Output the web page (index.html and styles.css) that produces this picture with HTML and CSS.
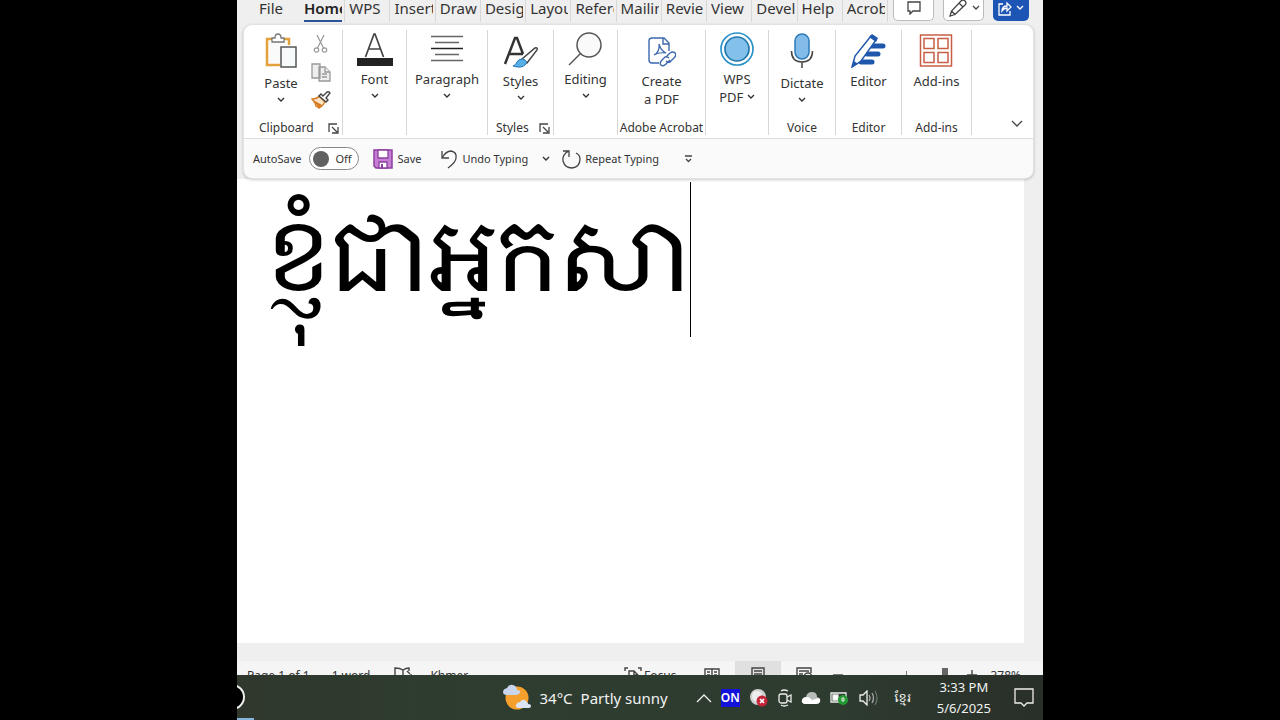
FILE: index.html
```html
<!DOCTYPE html>
<html lang="en">
<head>
<meta charset="utf-8">
<title>Word</title>
<link rel="stylesheet" href="styles.css">
</head>
<body>
<main class="screen">
  <header class="top">
    <nav class="tabs" aria-label="Ribbon tabs">
      <button class="tab tab-file"><span>File</span></button>
      <div class="tab-grid">
        <button class="tab active"><span>Home</span></button>
        <button class="tab"><span>WPS</span></button>
        <button class="tab"><span>Insert</span></button>
        <button class="tab"><span>Draw</span></button>
        <button class="tab" aria-label="Design"><span>Desig</span></button>
        <button class="tab" aria-label="Layout"><span>Layou</span></button>
        <button class="tab" aria-label="References"><span>Refere</span></button>
        <button class="tab" aria-label="Mailings"><span>Mailin</span></button>
        <button class="tab" aria-label="Review"><span>Revie</span></button>
        <button class="tab"><span>View</span></button>
        <button class="tab" aria-label="Developer"><span>Devel</span></button>
        <button class="tab"><span>Help</span></button>
        <button class="tab" aria-label="Acrobat"><span>Acrob</span></button>
      </div>
      <div class="actions">
        <button class="action" aria-label="Comments"><svg width="14" height="14" viewBox="0 0 14 14"><path d="M1 1h12v9H6l-3 3v-3H1z"/></svg></button>
        <button class="action" aria-label="Editing mode"><svg width="20" height="20" viewBox="0 0 20 20"><path d="M2 18l1.500-5L13 3q2-2 4 0t0 4L7 16.500zM11 5l4 4M3.500 13l3.500 3.500"/></svg><svg class="chev" width="8" height="6" viewBox="0 0 8 6"><path d="M1 1l3 3 3-3"/></svg></button>
        <button class="action share" aria-label="Share"><svg width="14" height="16" viewBox="0 0 14 16"><path d="M5 4H1v11h11v-4M4 11q0-5 5-5V3l4 4-4 4V8q-3 0-5 3z"/></svg><svg class="chev" width="8" height="6" viewBox="0 0 8 6"><path d="M1 1l3 3 3-3"/></svg></button>
      </div>
    </nav>

    <section class="card">
      <div class="ribbon">
        <div class="group g-clip">
          <div class="group-body">
            <button class="big"><svg width="34" height="38" viewBox="0 0 34 38"><path d="M8 7H3v26H16M20 7h5v6" fill="none" stroke="#e3a13c" stroke-width="2.500"/><path d="M5 9h18v4h-6v18H5z" fill="#fafafa"/><path d="M8 10V6h3q0-4 3-4t3 4h3v4z" fill="#fff" stroke="#777" stroke-width="1.300"/><path d="M17 15h15v20H17z" fill="#f7fafa" stroke="#555" stroke-width="1.500"/></svg><span>Paste</span><svg class="chev" width="8" height="6" viewBox="0 0 8 6"><path d="M1 1l3 3 3-3"/></svg></button>
            <div class="minis">
              <button aria-label="Cut"><svg width="20" height="20" viewBox="0 0 20 20" fill="none" stroke="#999" stroke-width="1.200"><path d="M6 1l6.500 13M13 1L6.500 14"/><circle cx="5.500" cy="16" r="2.200"/><circle cx="13.500" cy="16" r="2.200"/></svg></button>
              <button aria-label="Copy"><svg width="20" height="20" viewBox="0 0 20 20" fill="#eee" stroke="#999" stroke-width="1.300"><path d="M1 2h8v14H1zM8 5h6l5 5v9H8z"/><path d="M14 5v5h5M11 12h5M11 15h5"/></svg></button>
              <button aria-label="Format Painter"><svg width="20" height="20" viewBox="0 0 20 20"><path d="M1 9q5 0 7-3l6 6q-2 4-6 6l-3-2-1-3z" fill="#fbe3c4" stroke="#d57a20" stroke-width="1.400"/><path d="M2 10l9 5-3 3z" fill="#d57a20"/><path d="M8 6l2-2 2 2 4-4q2-1 3 1L15 8l2 2-2 2z" fill="#fff" stroke="#444" stroke-width="1.400"/></svg></button>
            </div>
          </div>
          <div class="caption"><span>Clipboard</span><button class="launch" aria-label="Clipboard settings"><svg width="11" height="11" viewBox="0 0 11 11"><path d="M1 9V1h8M4 4l5 5M10 4v6H4"/></svg></button></div>
        </div>
        <div class="group g-font">
          <button class="big"><svg width="38" height="34" viewBox="0 0 38 34"><path d="M9.500 25L18 2h1l8.500 23M13 17h11.500" fill="none" stroke="#444" stroke-width="1.700"/><path d="M1 26h36v8H1z" fill="#222"/></svg><span>Font</span><svg class="chev" width="8" height="6" viewBox="0 0 8 6"><path d="M1 1l3 3 3-3"/></svg></button>
        </div>
        <div class="group g-para">
          <button class="big"><svg width="34" height="34" viewBox="0 0 34 34"><path d="M1 4.500h32M5 10.500h24M5 22.500h24M1 28.500h32" stroke="#666" stroke-width="1.500"/><path d="M1 16.500h32" stroke="#222" stroke-width="1.500"/></svg><span>Paragraph</span><svg class="chev" width="8" height="6" viewBox="0 0 8 6"><path d="M1 1l3 3 3-3"/></svg></button>
        </div>
        <div class="group g-styles">
          <button class="big"><svg width="36" height="36" viewBox="0 0 36 36"><path d="M2 32L12 6h2l6 16M6 22h14" fill="none" stroke="#333" stroke-width="2.500"/><path d="M19 27L32 16q3-1 2 2L24 31z" fill="#fff" stroke="#444" stroke-width="1.500"/><path d="M10 34q3-1 4-4t6-3q5 2 3 5-4 5-13 2z" fill="#58aee6" stroke="#2676b5"/></svg><span>Styles</span><svg class="chev" width="8" height="6" viewBox="0 0 8 6"><path d="M1 1l3 3 3-3"/></svg></button>
          <div class="caption"><span>Styles</span><button class="launch" aria-label="Styles settings"><svg width="11" height="11" viewBox="0 0 11 11"><path d="M1 9V1h8M4 4l5 5M10 4v6H4"/></svg></button></div>
        </div>
        <div class="group g-edit">
          <button class="big"><svg width="36" height="34" viewBox="0 0 36 34" fill="none" stroke="#555" stroke-width="1.500"><circle cx="21" cy="13" r="12" fill="#fafafa"/><path d="M12.500 21.500L1 33"/></svg><span>Editing</span><svg class="chev" width="8" height="6" viewBox="0 0 8 6"><path d="M1 1l3 3 3-3"/></svg></button>
        </div>
        <div class="group g-adobe">
          <button class="big"><svg width="30" height="36" viewBox="0 0 30 36" fill="none" stroke="#3c68ae" stroke-width="1.400"><path d="M13 31H6q-3 0-3-3V9q0-3 3-3h12l5 5v8M17 6v6h6"/><path d="M8 23q6-3 5-11 2 7 7 9-7-1-12 2z" stroke-width="1.200"/><path d="M20 25l4-4q3-2 5 0t-1 5l-4 4q-2 1-4-1M24 28l-4 4q-3 3-5 1t1-5l3-3q2-1 4 1"/></svg><span>Create<br>a PDF</span></button>
          <div class="caption"><span>Adobe Acrobat</span></div>
        </div>
        <div class="group g-wps">
          <button class="big"><svg width="34" height="34" viewBox="0 0 34 34"><circle cx="17" cy="17" r="16" fill="#fff" stroke="#2b93c9" stroke-width="1.700"/><circle cx="17" cy="17" r="12" fill="#83c0ea" stroke="#2277ad" stroke-width="1.700"/></svg><span>WPS<br>PDF <svg class="chev" width="8" height="8" viewBox="0 0 8 8"><path d="M1 1l3 3 3-3"/></svg></span></button>
        </div>
        <div class="group g-voice">
          <button class="big"><svg width="24" height="38" viewBox="0 0 24 38"><rect x="5" y="2" width="14" height="25" rx="7" fill="#83bce8" stroke="#2c7ab8" stroke-width="1.500"/><path d="M1.500 19q0 11 10.500 11t10.500-11M12 30v6" fill="none" stroke="#444" stroke-width="1.500"/></svg><span>Dictate</span><svg class="chev" width="8" height="6" viewBox="0 0 8 6"><path d="M1 1l3 3 3-3"/></svg></button>
          <div class="caption"><span>Voice</span></div>
        </div>
        <div class="group g-editor">
          <button class="big"><svg width="36" height="36" viewBox="0 0 36 36"><path d="M21 14h12M17 22h11M11 30h11" stroke="#1f57ad" stroke-width="5" stroke-linecap="round"/><path d="M2 35l3-11L21 4l5 4-15 21z" fill="#fff" stroke="#1f57ad" stroke-width="1.500"/><path d="M19 5l3-3 6 4-2 4zM2 35l2-6 4 3z" fill="#1f57ad"/></svg><span>Editor</span></button>
          <div class="caption"><span>Editor</span></div>
        </div>
        <div class="group g-add">
          <button class="big"><svg width="34" height="36" viewBox="0 0 34 36" fill="none" stroke="#c65f44" stroke-width="1.500"><path d="M1.500 3h31v31h-31zM5 6.500h10v10H5zM19 6.500h10v10H19zM5 20.500h10v10H5zM19 20.500h10v10H19z"/></svg><span>Add-ins</span></button>
          <div class="caption"><span>Add-ins</span></div>
        </div>
        <button class="collapse" aria-label="Collapse ribbon"><svg width="12" height="8" viewBox="0 0 12 8"><path d="M1 1l5 5 5-5"/></svg></button>
      </div>

      <div class="quick">
        <label class="autosave">AutoSave <span class="switch"><input type="checkbox" role="switch"><span>Off</span></span></label>
        <button class="q-save"><svg width="20" height="20" viewBox="0 0 20 20"><path d="M1 1h18v18H3l-2-2z" fill="#c77fd6" stroke="#8d3f9e" stroke-width="1.500"/><path d="M5 1h10v8H5zM6 13h8v6H6z" fill="#fff" stroke="#8d3f9e" stroke-width="1.300"/><path d="M8 15h2v4H8z" fill="#8d3f9e"/></svg>Save</button>
        <button class="q-undo"><svg width="18" height="20" viewBox="0 0 18 20"><path d="M2 2v7h7M2 9q4-7 9-7 6 1 5 7 0 4-8 10"/></svg>Undo Typing</button>
        <button class="q-more" aria-label="Undo history"><svg class="chev" width="8" height="6" viewBox="0 0 8 6"><path d="M1 1l3 3 3-3"/></svg></button>
        <button class="q-redo"><svg width="20" height="20" viewBox="0 0 20 20"><path d="M2 2h6v6M8 2Q1 5 2 12q2 7 9 7 8-1 8-9 0-4-4-6"/></svg>Repeat Typing</button>
        <button class="q-custom" aria-label="Customize toolbar"><svg width="9" height="8" viewBox="0 0 9 8"><path d="M1 1h7M2 4l2.500 2.500L7 4"/></svg></button>
      </div>
    </section>
  </header>

  <section class="document">
    <div class="page"><p lang="km" class="typed">ខ្ញុំជាអ្នកសា</p></div>
  </section>

  <footer class="status">
    <div class="status-row">
      <span class="s-page">Page 1 of 1</span>
      <span class="s-word">1 word</span>
      <button class="s-proof" aria-label="Proofing"><svg width="18" height="16" viewBox="0 0 18 16"><path d="M9 3Q6 1 1 1v11q5 0 8 2 3-2 8-2V7M9 3v11M9 3q3-2 6-2v3M13 4l3 3"/></svg></button>
      <span>Khmer</span>
      <button class="s-focus"><svg width="18" height="16" viewBox="0 0 18 16"><path d="M1 4V1h3M14 1h3v3M5 15V4h5l4 4v7M10 4v4h4"/></svg>Focus</button>
      <button class="s-view" aria-label="Read mode"><svg width="16" height="16" viewBox="0 0 16 16"><path d="M8 2H1v11h7zM8 2h7v11H8zM3 5h3M3 8h3M10 5h3M10 8h3"/></svg></button>
      <button class="s-view on" aria-label="Print layout"><svg width="16" height="16" viewBox="0 0 16 16"><path d="M2 1h12v14H2zM4 4h8M4 7h8M4 10h8"/></svg></button>
      <button class="s-view" aria-label="Web layout"><svg width="16" height="16" viewBox="0 0 16 16"><path d="M15 6V1H1v13h6M3 4h10M3 7h4"/><circle cx="12" cy="10" r="4"/></svg></button>
      <button class="s-minus" aria-label="Zoom out"><svg width="10" height="10" viewBox="0 0 10 10"><path d="M0 5h10"/></svg></button>
      <input class="zoom" type="range" min="0" max="100" value="87" aria-label="Zoom">
      <button aria-label="Zoom in"><svg width="10" height="10" viewBox="0 0 10 10"><path d="M0 5h10M5 0v10"/></svg></button>
      <button class="s-pct">378%</button>
    </div>
  </footer>

  <footer class="taskbar">
    <button class="cortana" aria-label="Running app"></button>
    <button class="weather"><svg width="30" height="30" viewBox="0 0 30 30"><circle cx="15" cy="15" r="11.500" fill="#f5a02d"/><path d="M8 12H5q-4 0-4-3t4-4q2-4 6-3t4 5q4 0 3 3l-3 2z" fill="#c9d5ec"/><path d="M17 25q-4 0-3-3t4-3q3-4 6-1t2 3q3 0 3 2t-2 2z" fill="#dbe4f4"/></svg><span>34°C</span><span>Partly sunny</span></button>
    <div class="tray">
      <button aria-label="Show hidden icons"><svg width="16" height="10" viewBox="0 0 16 10"><path d="M1 9l7-7 7 7"/></svg></button>
      <button class="on-badge">ON</button>
      <button aria-label="Security"><svg width="20" height="20" viewBox="0 0 20 20" class="solid"><circle cx="9" cy="9" r="8" fill="#d0d0d0"/><path d="M4 4q6-3 9 2l-6 8q-6-3-3-10z" fill="#eee"/><circle cx="13" cy="13" r="5.500" fill="#c32436"/><path d="M11 11l4 4M15 11l-4 4" stroke="#fff" stroke-width="1.700"/></svg></button>
      <button aria-label="Meet now"><svg width="14" height="18" viewBox="0 0 14 18"><rect x="1" y="5" width="8" height="9" rx="2"/><path d="M9 8l4-2v7l-4-2M3 2q3-2 7 0M3 16q3 2 7 0"/></svg></button>
      <button aria-label="OneDrive"><svg width="20" height="14" viewBox="0 0 20 14" class="solid"><path d="M4 13q-4-1-3-4t4-3q1-5 6-5t5 5q4 1 3 4t-4 3z" fill="#b9bdb9"/><path d="M4 13q-4-1-3-4t5-3q3 0 5 3l7-2q2 2 1 4t-4 2z" fill="#fff"/></svg></button>
      <button aria-label="Battery"><svg width="20" height="16" viewBox="0 0 20 16"><path d="M1 3h15v9H1z"/><path d="M3 5h5v5H3z" fill="#fff"/><circle cx="13" cy="10" r="5" fill="#239b35" stroke="none"/><path d="M12 8h2v3h-2z" stroke-width="1"/></svg></button>
      <button aria-label="Volume"><svg width="20" height="16" viewBox="0 0 20 16"><path d="M1 5h3l4-4v14l-4-4H1z"/><path d="M10 5q2 3 0 6M13 3q3 5 0 10" stroke="#aaa"/><path d="M16 1q4 7 0 14" stroke="#667066"/></svg></button>
      <button class="lang" lang="km">ខ្មែរ</button>
    </div>
    <button class="clock">3:33 PM<br>5/6/2025</button>
    <button class="notif" aria-label="Notifications"><svg width="20" height="20" viewBox="0 0 20 20"><path d="M1 1h18v14h-6l-3 3-3-3H1z"/></svg></button>
  </footer>
</main>
</body>
</html>
```

FILE: styles.css
```css
* { box-sizing: border-box; }

body {
  margin: 0;
  background: #000;
  color: #333;
  font-family: "Noto Sans", "Open Sans", sans-serif;
  font-size: 12px;
}

button {
  margin: 0;
  padding: 0;
  border: 0;
  background: none;
  color: inherit;
  font: inherit;
}

svg { display: block; flex: none; }

.screen {
  display: flex;
  flex-direction: column;
  max-width: 806px;
  height: 100vh;
  margin: 0 auto;
  overflow: hidden;
  background: #efefef;
}

/* Tabs */
.tabs {
  display: flex;
  align-items: stretch;
  height: 24px;
  padding-right: 14px;
}

.tab {
  height: 22px;
  padding: 0 2px 0 4px;
  border-right: 1px solid #d8d8d8;
  font-size: 15px;
  line-height: 16px;
  text-align: left;
  min-width: 0;
}

.tab span {
  display: block;
  height: 22px;
  overflow: hidden;
  white-space: nowrap;
}

.tab-file { width: 63px; padding-left: 22px; border: 0; }

.tab-grid {
  flex: 1;
  display: grid;
  grid-template-columns: repeat(13, minmax(0, 1fr));
}

.active { font-weight: 600; color: #222; }
.active span { border-bottom: 2px solid #2a5298; }

.actions { display: flex; gap: 9px; margin-left: 5px; }

.action {
  display: flex;
  align-items: center;
  justify-content: center;
  gap: 4px;
  width: 41px;
  height: 21px;
  padding-bottom: 5px;
  border: 1px solid #bbb;
  border-top: 0;
  border-radius: 0 0 5px 5px;
  background: #fff;
}

.action svg, .launch svg, .collapse svg, .q-undo svg, .q-redo svg, .q-custom svg {
  fill: none;
  stroke: #444;
  stroke-width: 1.3;
}

.share { width: 36px; border: 0; background: #1d55b4; }
.action.share svg { stroke: #fff; }

.chev { fill: none; stroke: #333; stroke-width: 1.4; }

/* Ribbon */
.card {
  position: relative;
  margin: 0 9px 0 6px;
  border: 1px solid #e2e2e2;
  border-radius: 9px;
  background: #fafafa;
  box-shadow: 0 1px 3px #0003;
}

.ribbon {
  display: flex;
  height: 114px;
  padding: 5px 0 3px;
  border-bottom: 1px solid #ddd;
  border-radius: 9px 9px 0 0;
  background: #fff;
}

.group {
  display: flex;
  flex-direction: column;
  justify-content: space-between;
  align-items: center;
  border-right: 1px solid #d6d6d6;
}

.group-body { display: flex; width: 100%; }

.big {
  display: flex;
  flex-direction: column;
  align-items: center;
  padding-top: 2px;
  font-size: 13px;
  line-height: 18px;
}

.big > span { margin: 4px 0 5px; }
.big span .chev { display: inline-block; }

.g-clip { flex: 0 0 99px; }
.g-font { flex: 0 0 64px; }
.g-para { flex: 0 0 81px; }
.g-styles { flex: 0 0 66px; }
.g-edit { flex: 0 0 64px; }
.g-adobe { flex: 0 0 88px; }
.g-wps { flex: 0 0 63px; }
.g-voice { flex: 0 0 67px; }
.g-editor { flex: 0 0 66px; }
.g-add { flex: 0 0 70px; }

.g-clip .big { margin-left: 20px; }
.minis { display: flex; flex-direction: column; gap: 8px; padding: 4px 0 0 13px; }

.caption {
  display: flex;
  align-items: center;
  height: 14px;
  font-size: 12px;
  line-height: 14px;
  white-space: nowrap;
}

.g-clip .caption, .g-styles .caption {
  justify-content: space-between;
  width: 100%;
  padding: 0 3px 0 15px;
}

.g-styles .caption { padding: 0 3px 0 8px; }

.collapse { margin: auto 10px 7px auto; }

/* Quick access bar */
.quick {
  display: flex;
  align-items: center;
  height: 39px;
  padding-left: 9px;
  font-size: 11px;
}

.quick button, .autosave { display: flex; align-items: center; white-space: nowrap; }
.autosave { gap: 8px; margin-right: 14px; }

.switch {
  display: flex;
  align-items: center;
  gap: 6px;
  width: 50px;
  height: 23px;
  padding: 0 3px;
  border: 1px solid #888;
  border-radius: 12px;
  background: #fff;
}

.switch input {
  appearance: none;
  width: 16px;
  height: 16px;
  margin: 0;
  border-radius: 50%;
  background: #606060;
}

.quick .q-save { gap: 4px; margin-right: 19px; }
.quick .q-undo { gap: 4px; margin-right: 14px; }
.quick .q-more { margin-right: 11px; }
.quick .q-redo { gap: 4px; margin-right: 25px; }

/* Document */
.document { flex: 1; display: flex; min-height: 0; padding: 0 19px 18px 0; }
.page { flex: 1; padding: 3px 28px; background: #fff; color: #000; overflow: hidden; }

.typed {
  display: inline-block;
  height: 155px;
  margin: 0;
  border-right: 1px solid #000;
  font-family: "Noto Serif Khmer", "Noto Sans Khmer", "Khmer OS", serif;
  font-size: 98px;
  font-weight: 400;
  line-height: 142px;
  white-space: nowrap;
}

/* Status bar */
.status { height: 14px; overflow: hidden; background: #f5f5f5; }
.status-row { display: flex; align-items: center; height: 28px; padding-left: 10px; font-size: 12px; }
.status-row svg { fill: none; stroke: #444; stroke-width: 1.4; }
.status-row button { display: flex; align-items: center; justify-content: center; }
.s-word { margin-left: 22px; }
.status-row .s-proof { margin: 0 18px 0 24px; }
.status-row .s-focus { gap: 2px; margin-left: auto; margin-right: 13px; }
.s-view { width: 46px; height: 28px; }
.on { background: #e0e0e0; }
.status-row .s-minus { margin-left: 6px; }

.zoom {
  appearance: none;
  width: 110px;
  height: 14px;
  margin: 0 6px 0 8px;
  background: linear-gradient(#777, #777) center / 1px 8px no-repeat;
}

.zoom::-webkit-slider-thumb { appearance: none; width: 6px; height: 14px; background: #666; }
.status-row .s-pct { margin: 0 22px 0 13px; }

/* Taskbar */
.taskbar {
  display: flex;
  align-items: center;
  height: 45px;
  padding-right: 9px;
  background: linear-gradient(90deg, #30382d, #2e3d30 30%, #2e3b2f 75%, #292f29);
  color: #f2f2f2;
}

.taskbar svg { fill: none; stroke: #eee; stroke-width: 1.3; }
.cortana { align-self: stretch; width: 17px; overflow: hidden; border-bottom: 2px solid #86b5dc; }

.cortana::before {
  content: "";
  display: block;
  width: 22px;
  height: 22px;
  margin-left: -18px;
  border: 2px solid #eee;
  border-radius: 50%;
  background: #000;
}

.weather { display: flex; align-items: center; gap: 8px; margin-left: auto; font-size: 15px; white-space: nowrap; }
.taskbar .weather svg, .taskbar .solid { stroke: none; }
.tray { display: flex; align-items: center; gap: 9px; margin-left: 28px; }
.on-badge { background: #1212d8; color: #fff; font-size: 12px; font-weight: 600; line-height: 18px; }
.lang { width: 22px; margin-left: 4px; font-family: "Noto Serif Khmer", "Noto Sans Khmer", "Khmer OS", serif; font-size: 12px; }
.clock { margin: 0 23px 0 23px; font-size: 13px; line-height: 21px; }
```
